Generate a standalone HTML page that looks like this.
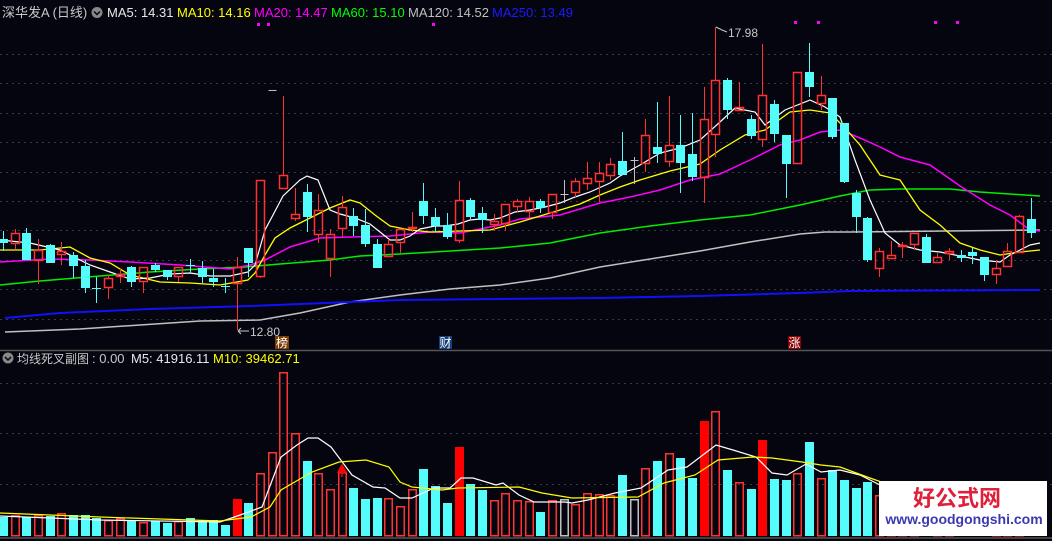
<!DOCTYPE html>
<html><head><meta charset="utf-8"><style>
html,body{margin:0;padding:0;background:#05050f;width:1052px;height:541px;overflow:hidden}
svg{display:block}
text{font-family:"Liberation Sans","Noto Sans CJK SC",sans-serif}
</style></head><body>
<svg id="s" width="1052" height="541" xmlns="http://www.w3.org/2000/svg">
<rect width="1052" height="541" fill="#05050f"/>
<g id="grid" stroke="#3a3a44" stroke-width="1" stroke-dasharray="2,4"></g>
<line x1="0" y1="350.5" x2="1052" y2="350.5" stroke="#555" stroke-width="1.5"/>
<line x1="0" y1="538" x2="1052" y2="538" stroke="#555" stroke-width="1.5"/>
<g id="vol"></g>
<g id="ma" fill="none" stroke-width="1.2"></g>
<g id="cdl"></g>
<text y="17" font-size="13">
<tspan x="2" fill="#c8c8c8">深华发A (日线)</tspan>
</text>
<circle cx="97" cy="12.5" r="5.5" fill="#888"/>
<path d="M94 11.5 L97 14.5 L100 11.5" stroke="#05050f" stroke-width="1.5" fill="none"/>
<text y="17" font-size="13">
<tspan x="107" fill="#e8e8e8">MA5: 14.31</tspan>
<tspan x="177" fill="#ffff00">MA10: 14.16</tspan>
<tspan x="254" fill="#ff00ff">MA20: 14.47</tspan>
<tspan x="331" fill="#00ff00">MA60: 15.10</tspan>
<tspan x="408" fill="#c0c0c0">MA120: 14.52</tspan>
<tspan x="492" fill="#1a1aff">MA250: 13.49</tspan>
</text>
<g fill="#ff00ff">
<rect x="257" y="23" width="3" height="3"/><rect x="267" y="23" width="3" height="3"/>
<rect x="432" y="23" width="3" height="3"/><rect x="794" y="21" width="3" height="3"/>
<rect x="817" y="21" width="3" height="3"/><rect x="934" y="21" width="3" height="3"/>
<rect x="956" y="21" width="3" height="3"/>
</g>
<path d="M716 27 L722 30 L727 32" stroke="#c8c8c8" fill="none"/>
<text x="728" y="37" font-size="12" fill="#c8c8c8">17.98</text>
<path d="M238 331 L249 331 M238 331 L241 328 M238 331 L241 334" stroke="#c8c8c8" fill="none"/>
<text x="250" y="336" font-size="12" fill="#c8c8c8">12.80</text>
<rect x="275" y="336" width="14" height="13" fill="#7a3c00"/>
<text x="276" y="347" font-size="12" fill="#fff">榜</text>
<rect x="439" y="336" width="13" height="13" fill="#14407a"/>
<text x="439.5" y="347" font-size="12" fill="#fff">财</text>
<rect x="788" y="336" width="13" height="13" fill="#8b0000"/>
<text x="788.5" y="347" font-size="12" fill="#fff">涨</text>
<circle cx="8" cy="358" r="5.5" fill="#888"/>
<path d="M5 357 L8 360 L11 357" stroke="#05050f" stroke-width="1.5" fill="none"/>
<text y="363" font-size="12" fill="#c8c8c8" x="17">均线死叉副图</text>
<text y="363" font-size="13">
<tspan x="92" fill="#c8c8c8">: 0.00</tspan>
<tspan x="131" fill="#e8e8e8">M5: 41916.11</tspan>
<tspan x="213" fill="#ffff00">M10: 39462.71</tspan>
</text>
<rect x="879" y="481" width="168" height="55" fill="#ffffff"/>
<text x="957" y="506" font-size="22" font-weight="bold" fill="#e0203a" text-anchor="middle">好公式网</text>
<text x="964" y="524" font-size="14" font-weight="bold" fill="#3a3ab0" text-anchor="middle">www.goodgongshi.com</text>
</svg>
<script>
const NS="http://www.w3.org/2000/svg";
function el(p,t,a){const e=document.createElementNS(NS,t);for(const k in a)e.setAttribute(k,a[k]);p.appendChild(e);return e;}
const grid=document.getElementById('grid');
for(let k=0;k<10;k++){const y=Math.round(54+k*29.4)+0.5;el(grid,'line',{x1:0,y1:y,x2:1052,y2:y});}
[383.5,433.5,484.5].forEach(y=>el(grid,'line',{x1:0,y1:y,x2:1052,y2:y}));
const C=[['c',239,243,231,251],['r',233,244,229,249],['c',233,260,228,260],['r',250,261,239,284],['c',245,263,244,263],['r',251,255,242,265],['c',255,266,252,278],['c',266,288,260,293],['c',288,289,277,303],['r',278,288,275,299],['r',274,277,268,283],['c',267,282,266,287],['r',267,282,267,293],['c',265,270,263,272],['c',270,277,270,280],['r',267,277,267,282],['c',265,266,259,273],['c',268,277,261,283],['c',278,282,269,287],['c',286,287,278,293],['r',267,284,257,330],['c',248,263,248,277],['r',180,277,180,278],['d',90,90,90,90],['r',175,189,96,189],['r',214,219,188,221],['c',192,217,184,232],['r',210,235,194,243],['r',234,259,229,277],['r',207,229,196,237],['c',216,226,208,236],['c',225,244,209,247],['c',244,268,239,268],['r',244,257,239,257],['r',229,243,229,253],['r',227,228,212,232],['c',201,216,183,224],['c',217,226,208,232],['c',225,237,213,239],['r',200,241,181,243],['c',200,217,198,219],['c',213,220,207,233],['r',221,225,214,231],['r',204,224,204,231],['r',201,207,199,212],['r',201,212,197,217],['c',201,208,199,213],['r',194,213,194,219],['g',194,194,180,203],['r',181,193,178,197],['r',178,184,162,190],['r',173,182,162,202],['r',164,176,158,180],['c',161,175,132,175],['g',160,160,157,184],['r',135,164,119,172],['c',147,154,102,163],['r',145,162,96,167],['c',145,163,115,193],['c',154,177,113,181],['r',119,178,87,203],['r',80,135,27,157],['c',80,110,78,119],['r',107,111,82,111],['c',119,136,115,139],['r',95,140,44,147],['c',104,134,100,142],['c',135,164,135,198],['r',72,164,72,164],['c',72,87,43,97],['r',95,104,76,110],['c',98,137,98,139],['c',123,182,123,183],['c',193,217,190,233],['c',218,260,217,262],['r',251,269,248,277],['r',255,259,241,259],['r',245,247,242,258],['r',233,245,233,250],['c',237,263,234,263],['r',257,263,253,263],['r',251,254,248,260],['c',255,258,250,262],['c',252,256,248,264],['c',257,275,257,281],['r',268,275,260,284],['r',251,267,243,267],['r',216,253,215,253],['c',219,233,198,238]];
const V=[517,515,517,515,516,513,515,515,518,520,518,520,522,521,523,521,518,520,520,
525,'499f',503,473,452,372,433,461,473,489,472,488,499,498,498,506,489,469,486,503,'447f',484,490,500,493,500,501,512,500,499,504,493,494,495,475,499,468,461,453,458,478,'421f',411,470,482,489,'440f',479,480,473,442,478,
470,480,488,482,495,500,505,498,492,490,505,508,506,500,492,505,498,488];
const RED='#ff3232',CY='#54fcfc',GR='#c0c0c0';
const cg=document.getElementById('cdl'),vg=document.getElementById('vol');
const X=i=>Math.round(3+i*11.68);
C.forEach((c,i)=>{const x=X(i)+0.5;const [t,tp,bt,h,l]=c;
 if(t==='d'){el(cg,'line',{x1:x-4,y1:tp+0.5,x2:x+4,y2:tp+0.5,stroke:GR,'stroke-width':1});}
 else if(t==='g'){el(cg,'line',{x1:x,y1:h,x2:x,y2:l,stroke:GR});el(cg,'line',{x1:x-4,y1:tp+0.5,x2:x+4,y2:tp+0.5,stroke:GR});}
 else if(t==='c'){el(cg,'line',{x1:x,y1:h,x2:x,y2:l,stroke:CY});el(cg,'rect',{x:x-4.5,y:tp,width:9,height:Math.max(1,bt-tp),fill:CY});}
 else{ if(h<tp)el(cg,'line',{x1:x,y1:h,x2:x,y2:tp,stroke:RED}); if(l>bt)el(cg,'line',{x1:x,y1:bt,x2:x,y2:l,stroke:RED});
   el(cg,'rect',{x:x-4,y:tp+0.5,width:8,height:Math.max(1,bt-tp-1),fill:'none',stroke:RED,'stroke-width':1.5});}
 let v=V[i];let f=false;if(typeof v==='string'){f=true;v=parseInt(v);}
 const bot=536;
 if(f) el(vg,'rect',{x:x-4.5,y:v,width:9,height:bot-v,fill:'#ff0000'});
 else if(t==='c') el(vg,'rect',{x:x-4.5,y:v,width:9,height:bot-v,fill:CY});
 else el(vg,'rect',{x:x-3.75,y:v+0.75,width:7.5,height:bot-v-1,fill:'none',stroke:t==='g'?GR:RED,'stroke-width':1.5});
});
const mg=document.getElementById('ma');
function pl(pts,col,w){el(mg,'polyline',{points:pts.map(p=>p.join(',')).join(' '),stroke:col,'stroke-width':w||1.2});}
pl([[5,332],[80,329],[200,321],[260,320],[300,313],[350,302],[400,295],[450,289],[500,285],[550,278],[600,267],[650,259],[700,251],[750,242],[800,234],[825,232],[850,232],[1040,230]],'#c0c0c0',1.5);
pl([[5,318],[60,313],[150,309],[250,306],[350,302],[400,300],[500,299],[600,298],[700,296],[800,293],[850,291],[1040,290]],'#1010ff',2);
pl([[0,285],[40,281],[100,276],[150,272],[200,269],[245,267],[280,264],[330,260],[360,256],[400,254],[450,251],[500,248],[550,243],[600,233],[650,226],[700,220],[750,215],[800,205],[840,196],[870,190],[900,189],[950,189],[980,192],[1040,196]],'#00ee00',1.5);
pl([[0,262],[50,259],[90,260],[130,262],[180,265],[230,269],[250,265],[265,260],[290,247],[320,238],[350,237],[390,236],[430,232],[460,233],[500,225],[520,219],[560,215],[600,203],[630,197],[660,190],[690,180],[720,174],[750,160],[780,145],[800,140],[820,132],[840,130],[860,138],[880,147],[900,157],[930,165],[960,186],[990,205],[1010,215],[1030,230],[1040,231]],'#ff00ff',1.5);
pl([[0,250],[40,250],[70,247],[90,258],[110,263],[130,275],[160,282],[190,283],[220,285],[248,280],[255,273],[265,255],[275,238],[290,228],[310,218],[330,208],[350,200],[360,203],[375,215],[390,226],[410,230],[430,232],[460,231],[490,230],[520,222],[550,213],[580,204],[600,195],[620,187],[640,180],[670,171],[700,164],[720,150],[745,135],[765,130],[790,112],[810,110],[830,113],[845,128],[860,145],[880,175],[900,180],[920,210],[940,225],[960,243],[980,250],[1000,255],[1020,252],[1040,250]],'#ffff00',1.3);
pl([[0,240],[30,243],[60,250],[90,265],[110,272],[130,279],[150,278],[170,274],[190,273],[210,276],[230,276],[248,272],[255,265],[265,230],[273,215],[283,196],[300,180],[307,176],[318,180],[330,210],[340,214],[355,218],[370,224],[380,232],[390,240],[400,240],[410,236],[420,229],[435,226],[445,226],[458,224],[470,220],[480,219],[490,220],[500,218],[515,212],[530,210],[545,207],[560,203],[575,197],[590,192],[610,183],[620,176],[640,165],[660,153],[680,148],[700,140],[720,122],[735,108],[755,112],[765,125],[785,110],[810,100],[825,107],[840,117],[855,160],[870,200],[885,233],[900,245],[920,250],[940,252],[960,256],[980,260],[1000,262],[1010,255],[1030,245],[1040,243]],'#ffffff',1.2);
pl([[0,516],[100,520],[220,522],[243,514],[262,507],[281,457],[297,445],[308,438],[318,438],[331,447],[343,463],[352,475],[373,487],[385,488],[400,498],[412,498],[434,488],[450,488],[461,478],[473,478],[496,485],[503,483],[519,495],[534,502],[565,502],[572,503],[588,500],[615,493],[641,488],[668,470],[687,467],[716,445],[733,450],[756,457],[772,473],[787,475],[806,464],[821,472],[840,470],[860,475],[880,485]],'#ffffff',1.2);
pl([[0,513],[100,517],[220,521],[251,517],[270,507],[281,490],[312,472],[339,462],[366,460],[389,467],[400,482],[412,487],[442,490],[458,488],[519,487],[542,493],[572,498],[638,497],[664,483],[695,475],[718,460],[753,457],[772,458],[802,462],[821,465],[840,467],[870,478],[890,485]],'#ffff00',1.2);
el(mg,'path',{d:'M342 477 L342 470 M338 472 L342 465 L346 472 Z',stroke:'#ff0000',fill:'#ff0000','stroke-width':1.5});
</script>
</body></html>
